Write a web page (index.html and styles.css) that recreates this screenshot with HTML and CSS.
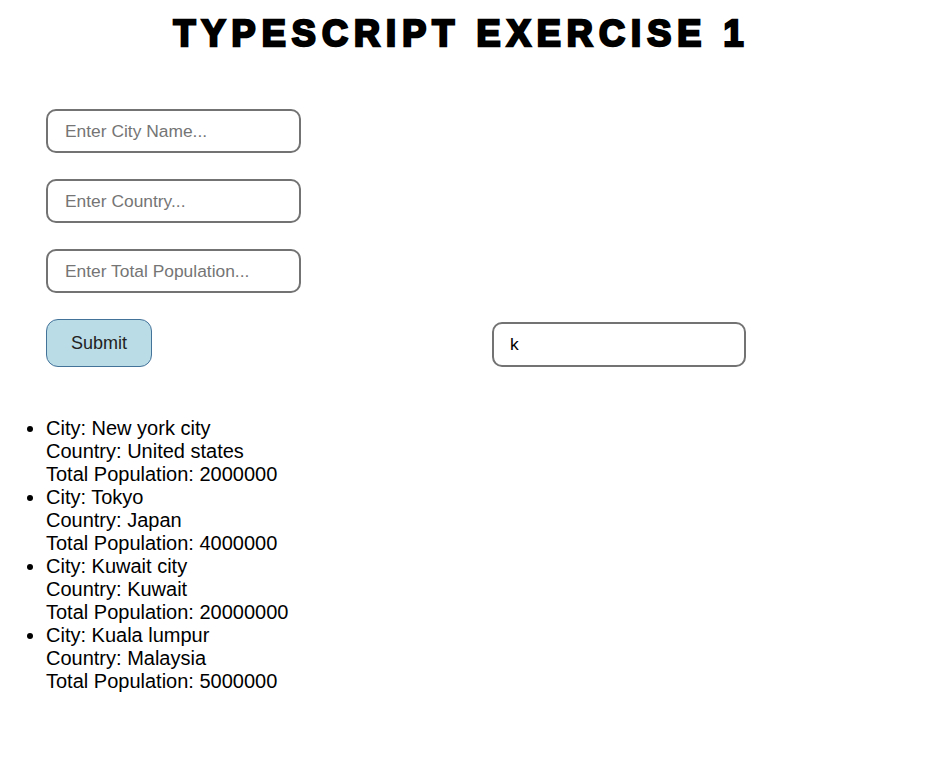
FILE: index.html
```html
<!DOCTYPE html>
<html>
<head>
<meta charset="utf-8">
<link rel="stylesheet" href="styles.css">
</head>
<body>
<h1 class="title">TYPESCRIPT EXERCISE 1</h1>
<div class="top">
  <form class="form">
    <input class="field" type="text" placeholder="Enter City Name...">
    <input class="field" type="text" placeholder="Enter Country...">
    <input class="field" type="text" placeholder="Enter Total Population...">
    <button class="submit" type="button">Submit</button>
  </form>
  <input class="field search" type="text" value="k">
</div>
<ul class="cities">
  <li>City: New york city<br>Country: United states<br>Total Population: 2000000</li>
  <li>City: Tokyo<br>Country: Japan<br>Total Population: 4000000</li>
  <li>City: Kuwait city<br>Country: Kuwait<br>Total Population: 20000000</li>
  <li>City: Kuala lumpur<br>Country: Malaysia<br>Total Population: 5000000</li>
</ul>
</body>
</html>
```

FILE: styles.css
```css
body {
  margin: 8px;
  font-family: "Liberation Sans", Arial, sans-serif;
  color: #000;
  background: #fff;
}
.title {
  margin: 0;
  padding: 2px 19px 0 0;
  text-align: center;
  font-size: 36px;
  font-weight: 900;
  letter-spacing: 6.1px;
  line-height: 48px;
  -webkit-text-stroke: 2.5px #000;
}
.top {
  display: flex;
  align-items: flex-end;
  padding-left: 38px;
  margin-top: 51px;
}
.form {
  width: 446px;
  display: flex;
  flex-direction: column;
  align-items: flex-start;
  gap: 26px;
}
.field {
  box-sizing: border-box;
  width: 255px;
  height: 44px;
  border: 2px solid #737373;
  border-radius: 10px;
  padding: 0 17px;
  font-family: "Liberation Sans", Arial, sans-serif;
  font-size: 17.4px;
  color: #000;
  background: #fff;
  outline: none;
}
.field::placeholder {
  color: #757575;
}
.search {
  width: 254px;
  height: 45px;
  padding-left: 16px;
}
.submit {
  box-sizing: border-box;
  width: 106px;
  height: 48px;
  border: 1px solid #44739a;
  border-radius: 12px;
  background: #badce6;
  font-family: "Liberation Sans", Arial, sans-serif;
  font-size: 18px;
  color: #222;
  padding: 0;
}
.cities {
  margin: 50px 0 0 0;
  padding-left: 38px;
  font-size: 20px;
  line-height: 23px;
}
```
